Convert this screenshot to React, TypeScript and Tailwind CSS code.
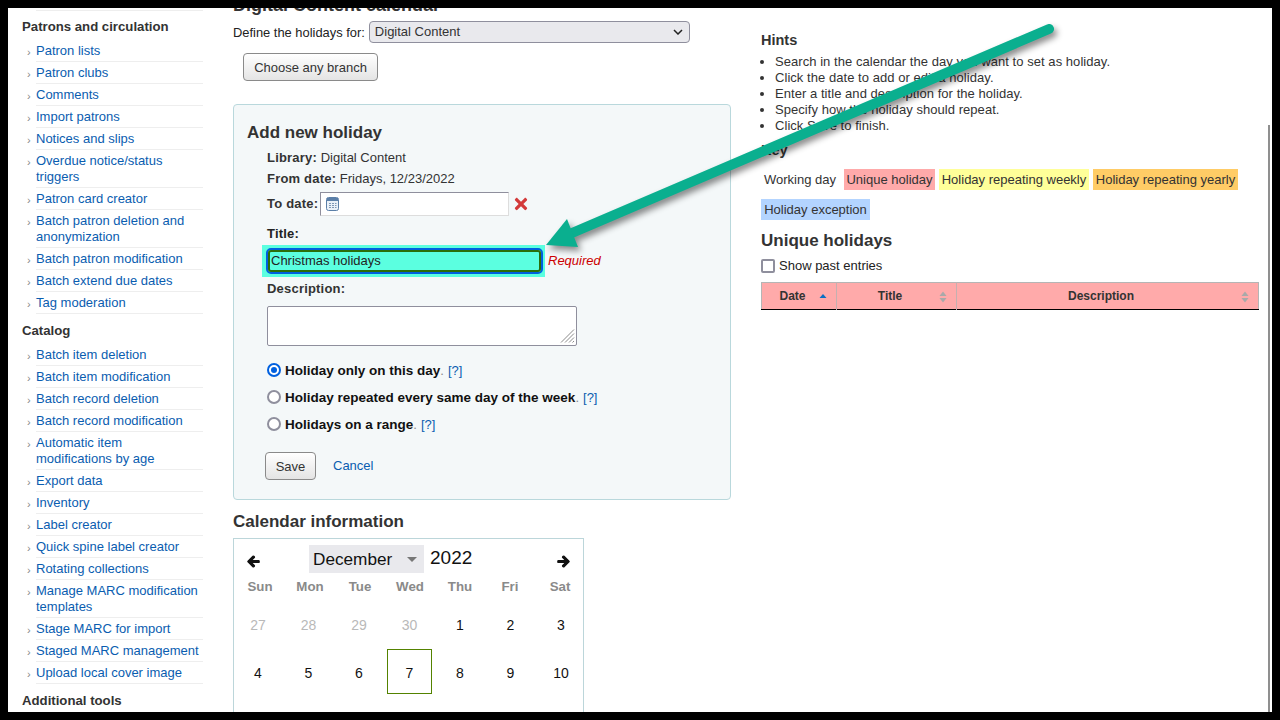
import React from "react";
import { FaArrowLeft, FaArrowRight, FaTimes } from "react-icons/fa";

const patrons: string[] = [
  "Patron lists", "Patron clubs", "Comments", "Import patrons", "Notices and slips",
  "Overdue notice/status triggers", "Patron card creator", "Batch patron deletion and anonymization",
  "Batch patron modification", "Batch extend due dates", "Tag moderation",
];
const catalog: string[] = [
  "Batch item deletion", "Batch item modification", "Batch record deletion", "Batch record modification",
  "Automatic item modifications by age", "Export data", "Inventory", "Label creator", "Quick spine label creator",
  "Rotating collections", "Manage MARC modification templates", "Stage MARC for import",
  "Staged MARC management", "Upload local cover image",
];
const hints: string[] = [
  "Search in the calendar the day you want to set as holiday.",
  "Click the date to add or edit a holiday.",
  "Enter a title and description for the holiday.",
  "Specify how the holiday should repeat.",
  "Click Save to finish.",
];

function NavList({ items }: { items: string[] }) {
  return (
    <ul className="mt-[6px] list-none">
      {items.map((t) => (
        <li key={t} className="flex">
          <span className="w-[14px] shrink-0 pl-[5px] pt-[4px] text-[11px] leading-[16px] text-[#888888]">›</span>
          <a className="block flex-1 border-b border-[#eeeeee] pb-[2px] pr-[3px] pt-[3px] text-[#0a5db0]">{t}</a>
        </li>
      ))}
    </ul>
  );
}

function Radio({ checked, label, mt }: { checked?: boolean; label: string; mt: string }) {
  return (
    <div className={`ml-[20px] flex h-[16px] items-center ${mt}`}>
      {checked ? (
        <span className="flex h-[14px] w-[14px] items-center justify-center rounded-full border-2 border-[#0060df] bg-white">
          <span className="h-[6px] w-[6px] rounded-full bg-[#0060df]" />
        </span>
      ) : (
        <span className="h-[14px] w-[14px] rounded-full border-2 border-[#8f8f9d] bg-white" />
      )}
      <b className="ml-[4px] mt-[2px] text-[13.5px] font-bold text-[#111111]">{label}</b>
      <span className="mt-[2px] text-[#888888]">.</span>
      <a className="ml-[4px] mt-[2px] text-[#0a5db0]">[?]</a>
    </div>
  );
}

function Chip({ label, cls }: { label: string; cls: string }) {
  return <span className={`flex h-[21px] items-center text-[#333333] ${cls}`}>{label}</span>;
}

function SortIcon({ mode }: { mode: "up" | "both" }) {
  return (
    <svg className="absolute right-[9px] top-[8px]" width="8" height="12" viewBox="0 0 8 12">
      {mode === "up" ? (
        <path d="M4 3 L7.5 7 L0.5 7 Z" fill="#0a6fc4" />
      ) : (
        <>
          <path d="M4 0.5 L7.5 5 L0.5 5 Z" fill="#a9a9a9" />
          <path d="M4 11.5 L7.5 7 L0.5 7 Z" fill="#a9a9a9" />
        </>
      )}
    </svg>
  );
}

const days: { d: string; muted?: boolean; today?: boolean }[] = [
  { d: "27", muted: true }, { d: "28", muted: true }, { d: "29", muted: true }, { d: "30", muted: true },
  { d: "1" }, { d: "2" }, { d: "3" }, { d: "4" }, { d: "5" }, { d: "6" }, { d: "7", today: true },
  { d: "8" }, { d: "9" }, { d: "10" },
];

export default function App() {
  return (
    <div className="relative h-[720px] w-[1280px] overflow-hidden bg-black p-[8px] font-['Liberation_Sans',Arial,sans-serif] text-[13px] leading-[16px] text-[#333333]">
      <div className="relative flex h-[704px] overflow-hidden bg-white">
        <aside className="w-[225px] shrink-0 pl-[14px]">
          <div className="mb-[7px] ml-[14px] mr-[30px] h-[3px] border-b border-[#eeeeee]" />
          <div className="w-[181px]">
            <h5 className="pt-[2px] text-[13.2px] font-bold leading-[14px] text-[#333333]">Patrons and circulation</h5>
            <NavList items={patrons} />
            <h5 className="mt-[8px] pt-[2px] text-[13.2px] font-bold leading-[14px] text-[#333333]">Catalog</h5>
            <NavList items={catalog} />
            <h5 className="mt-[9px] text-[13.2px] font-bold leading-[16px] text-[#333333]">Additional tools</h5>
          </div>
        </aside>

        <main className="w-[498px] shrink-0">
          <h1 className="mt-[-13px] text-[18px] font-bold leading-[20px] text-[#333333]">Digital Content calendar</h1>
          <div className="mt-[6px] flex h-[22px] items-start">
            <label className="mt-[4px] text-[12.9px] text-[#222222]">Define the holidays for:</label>
            <div className="ml-[4px] flex h-[22px] w-[321px] items-center justify-between rounded-[4px] border border-[#8f8f9d] bg-[#e9e9ed] pl-[5px] pr-[6px] text-[#333333]">
              <span>Digital Content</span>
              <svg width="10" height="6" viewBox="0 0 10 6">
                <path d="M1 1 L5 5 L9 1" fill="none" stroke="#222222" strokeWidth="1.5" />
              </svg>
            </div>
          </div>
          <button className="ml-[10px] mt-[10px] block h-[28px] w-[135px] rounded-[4px] border border-[#8a8a8a] bg-gradient-to-b from-white to-[#e4e4e4] pt-[2px] text-[#333333]">
            Choose any branch
          </button>

          <section className="mt-[23px] h-[396px] rounded-[4px] border border-[#b9d8dc] bg-[#f4f8f9] pl-[13px] pt-[16px]">
            <h3 className="pt-[2px] text-[17px] font-bold leading-[20px] text-[#333333]">Add new holiday</h3>
            <div className="ml-[20px] mt-[7px]"><b className="tracking-[0.2px]">Library:</b> Digital Content</div>
            <div className="ml-[20px] mt-[5px]"><b className="tracking-[0.2px]">From date:</b> Fridays, 12/23/2022</div>
            <div className="ml-[20px] mt-[5px] flex h-[24px] items-center">
              <b className="tracking-[0.2px]">To date:</b>
              <div className="ml-[2px] flex h-[24px] w-[189px] items-center border border-[#dddddd] border-l-[#8f8f9d] border-t-[#8f8f9d] bg-white pl-[5px]">
                <svg width="13" height="14" viewBox="0 0 13 14">
                  <rect x="0.5" y="0.5" width="12" height="13" rx="2" fill="#e9f0f8" stroke="#5b7fa8" />
                  <rect x="1" y="1" width="11" height="3" fill="#5b7fa8" />
                  <path d="M3 6h2v1H3zM6 6h2v1H6zM9 6h1.5v1H9zM3 8h2v1H3zM6 8h2v1H6zM9 8h1.5v1H9zM3 10h2v1H3zM6 10h2v1H6zM9 10h1.5v1H9z" fill="#7d97b5" />
                </svg>
              </div>
              <FaTimes className="ml-[3px] text-[#d33a3a]" size={18} />
            </div>
            <div className="ml-[20px] mt-[10px] font-bold tracking-[0.2px] text-[#222222]">Title:</div>
            <div className="mt-[3px] flex items-center">
              <div className="ml-[15px] flex h-[32px] w-[283px] items-center bg-[#5bffe0] pl-[4px]">
                <div className="h-[26px] w-[277px] rounded-[5px] border-2 border-[#0060df] bg-[#5bffe0]">
                  <div className="flex h-[22px] items-center rounded-[3px] border-2 border-[#2a6f0a] pl-[1px] text-[#222222]">Christmas holidays</div>
                </div>
              </div>
              <span className="ml-[3px] italic text-[#cc0000]">Required</span>
            </div>
            <div className="ml-[20px] mt-[4px] font-bold tracking-[0.2px]">Description:</div>
            <div className="relative ml-[20px] mt-[9px] h-[40px] w-[310px]">
              <textarea className="block h-[40px] w-[310px] resize-none rounded-[2px] border border-[#8f8f9d] bg-white" />
              <svg className="absolute bottom-[3px] right-[2px]" width="15" height="14" viewBox="0 0 15 14">
                <path d="M1 13.5 L14 0.5 M5 13.5 L14 4.5 M9 13.5 L14 8.5 M12.5 13.5 L14 12" stroke="#8a8a8a" strokeWidth="1" fill="none" />
              </svg>
            </div>
            <Radio checked label="Holiday only on this day" mt="mt-[16px]" />
            <Radio label="Holiday repeated every same day of the week" mt="mt-[11px]" />
            <Radio label="Holidays on a range" mt="mt-[11px]" />
            <div className="ml-[18px] mt-[20px] flex items-center">
              <button className="h-[28px] w-[51px] rounded-[4px] border border-[#8a8a8a] bg-gradient-to-b from-white to-[#e4e4e4] pt-[2px] text-[#333333]">Save</button>
              <a className="ml-[17px] text-[#0a5db0]">Cancel</a>
            </div>
          </section>

          <h3 className="mt-[10px] pt-[2px] text-[17px] font-bold leading-[20px] text-[#333333]">Calendar information</h3>
          <div className="mt-[6px] h-[300px] w-[351px] border border-[#bcd6da]">
            <div className="mt-[6px] flex h-[28px] items-center text-[#111111]">
              <FaArrowLeft className="ml-[13px] mt-[4px] text-[#111111] [stroke-width:45px]" size={13} />
              <div className="ml-[49px] flex h-[28px] w-[115px] items-center justify-between bg-[#e9e9ed] pl-[4px] pr-[7px] text-[17.2px]">
                <span>December</span>
                <svg width="10" height="5" viewBox="0 0 10 5"><path d="M0 0 H10 L5 5 Z" fill="#777777" /></svg>
              </div>
              <span className="mb-[2px] ml-[6px] text-[19px]">2022</span>
              <FaArrowRight className="ml-auto mr-[13px] mt-[4px] text-[#111111] [stroke-width:45px]" size={13} />
            </div>
            <div className="mt-[6px] grid grid-cols-[repeat(7,45px)] gap-x-[5px] pl-[3.5px] text-center text-[13.3px] font-bold text-[#8a8a8a]">
              <span>Sun</span><span>Mon</span><span>Tue</span><span>Wed</span><span>Thu</span><span>Fri</span><span>Sat</span>
            </div>
            <div className="mt-[6px] grid grid-cols-[repeat(7,45px)] gap-x-[5.5px] gap-y-[3px] pl-[1.5px] text-[14px] text-[#111111]">
              {days.map((c) => (
                <div
                  key={c.d + (c.muted ? "m" : "")}
                  className={`flex h-[45px] items-center justify-center pt-[2px] ${c.muted ? "text-[#b9b9b9]" : ""} ${c.today ? "border border-[#538200]" : ""}`}
                >
                  {c.d}
                </div>
              ))}
            </div>
          </div>
        </main>

        <section className="ml-[30px] w-[498px] shrink-0 pt-[24px]">
          <h4 className="text-[14.5px] font-bold leading-[17px]">Hints</h4>
          <ul className="mt-[5px] list-disc pl-[14px] tracking-[0.05px]">
            {hints.map((h) => <li key={h}>{h}</li>)}
          </ul>
          <h4 className="mt-[8px] text-[14.5px] font-bold leading-[16px]">Key</h4>
          <div className="mt-[11px] flex flex-wrap gap-x-[4px] gap-y-[9px]">
            <Chip label="Working day" cls="w-[79px] bg-white pl-[3px]" />
            <Chip label="Unique holiday" cls="w-[91px] justify-center bg-[#ffaaaa]" />
            <Chip label="Holiday repeating weekly" cls="w-[150px] justify-center bg-[#ffff99]" />
            <Chip label="Holiday repeating yearly" cls="w-[145px] justify-center bg-[#ffcc66]" />
            <Chip label="Holiday exception" cls="w-[109px] justify-center bg-[#b3d4ff]" />
          </div>
          <h3 className="mt-[9px] pt-[2px] text-[17px] font-bold leading-[20px] text-[#333333]">Unique holidays</h3>
          <div className="mt-[7px] flex h-[16px] items-center">
            <span className="h-[14px] w-[14px] rounded-[2px] border-2 border-[#8f8f9d] bg-white" />
            <span className="ml-[4px] text-[#222222]">Show past entries</span>
          </div>
          <table className="mt-[8px] w-[497px] table-fixed border-collapse text-[12px]">
            <colgroup>
              <col className="w-[75px]" /><col className="w-[120px]" /><col className="w-[302px]" />
            </colgroup>
            <thead>
              <tr className="h-[27px] border border-[#b5b5b5] border-b-black bg-[#ffaaaa]">
                <th className="relative border-r border-[#c4b0b0] pr-[13px] font-bold">Date<SortIcon mode="up" /></th>
                <th className="relative border-r border-[#c4b0b0] pr-[13px] font-bold">Title<SortIcon mode="both" /></th>
                <th className="relative pr-[13px] font-bold">Description<SortIcon mode="both" /></th>
              </tr>
            </thead>
          </table>
        </section>

        <div className="absolute left-[1260px] top-[117px] h-[600px] w-[2px] bg-[#8f8f8f]" />
      </div>

      <svg className="absolute left-0 top-0 drop-shadow-[3px_4px_3px_rgba(0,0,0,0.45)]" width="1280" height="720" viewBox="0 0 1280 720">
        <line x1="1049" y1="29" x2="572" y2="233" stroke="#0aaf8f" strokeWidth="10" strokeLinecap="round" />
        <polygon points="546,245 567,219 578,247" fill="#0aaf8f" />
      </svg>
    </div>
  );
}
